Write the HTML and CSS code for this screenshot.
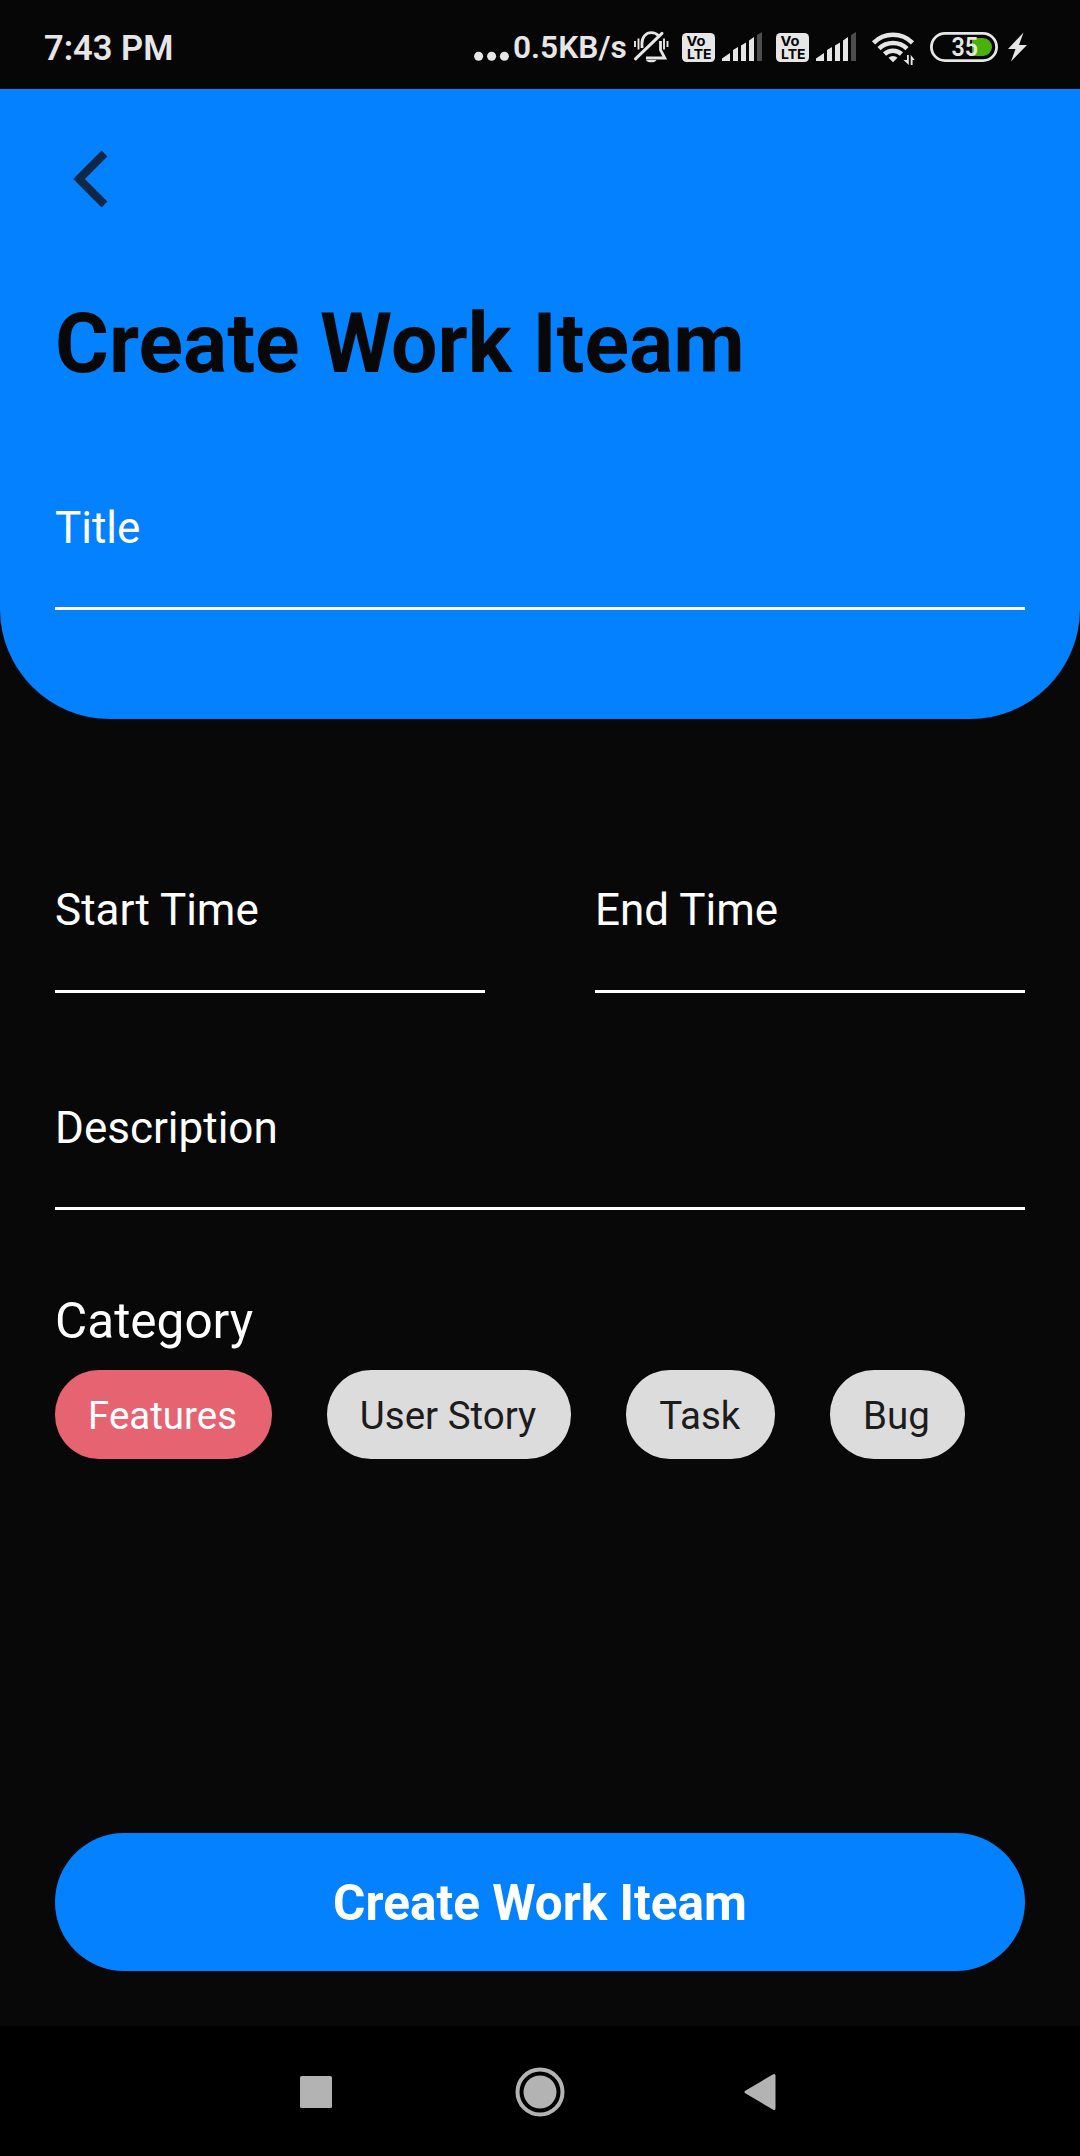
FILE: index.html
```html
<!DOCTYPE html>
<html lang="en">
<head>
<meta charset="utf-8">
<title>Create Work Iteam</title>
<link rel="stylesheet" href="styles.css">
</head>
<body>
<div class="status-bar">
  <span class="clock">7:43 PM</span>
  <div class="status-icons">
    <svg class="dots" width="36" height="89" viewBox="474 0 36 89"><circle cx="478.6" cy="56.3" r="4.5"/><circle cx="491.6" cy="56.3" r="4.5"/><circle cx="504.4" cy="56.3" r="4.5"/></svg>
    <span class="speed">0.5KB/s</span>
    <svg class="bell" width="36" height="89" viewBox="633 0 36 89">
      <g fill="none" stroke="#e6e6e6" stroke-width="2.8">
        <path d="M642 48v-5c0-6 4-10.300 9.300-10.300 3 0 5.500 1.200 7 3"/>
        <path d="M660.500 41v9l4.300 8H646"/>
        <path d="M635.500 58.800 662 33.300" stroke-width="3" stroke-linecap="round"/>
        <path d="M635 41v6M638.500 38.500v11M664 38.500v11M667.500 41v6" stroke-width="1.900"/>
      </g>
      <path d="M646 60h10.500a5.500 3.300 0 0 1-10.500 0z"/>
    </svg>
    <svg class="volte" width="33" height="89" viewBox="682 0 33 89"><rect x="682" y="33" width="33" height="29" rx="4.500"/><g fill="#060606" font-family="Inter, sans-serif" font-weight="700" font-size="13.500"><text x="686.500" y="46.200" textLength="19" lengthAdjust="spacingAndGlyphs">Vo</text><text x="687" y="59" textLength="24.500" lengthAdjust="spacingAndGlyphs">LTE</text></g></svg>
    <svg class="signal" width="41" height="89" viewBox="722 0 41 89"><path d="M722 61v-2.500l8-5.500v8zM733 61V50l5-3v14zM741 61V45.500l5-3V61zM749 61V40.500l5-3.500v24z"/><path fill="#4d4d4d" d="M757 61V35l5-3v29z"/></svg>
    <svg class="volte" width="33" height="89" viewBox="682 0 33 89"><rect x="682" y="33" width="33" height="29" rx="4.500"/><g fill="#060606" font-family="Inter, sans-serif" font-weight="700" font-size="13.500"><text x="686.500" y="46.200" textLength="19" lengthAdjust="spacingAndGlyphs">Vo</text><text x="687" y="59" textLength="24.500" lengthAdjust="spacingAndGlyphs">LTE</text></g></svg>
    <svg class="signal" width="41" height="89" viewBox="722 0 41 89"><path d="M722 61v-2.500l8-5.500v8zM733 61V50l5-3v14zM741 61V45.500l5-3V61zM749 61V40.500l5-3.500v24z"/><path fill="#4d4d4d" d="M757 61V35l5-3v29z"/></svg>
    <svg class="wifi" width="44" height="89" viewBox="871 0 44 89">
      <g fill="none" stroke="#e6e6e6" stroke-width="4.500"><path d="M873.500 42.800a27.500 27.500 0 0 1 39 0"/><path d="M879 48.600a20 20 0 0 1 28 0"/><path d="M884.500 54a12.500 12.500 0 0 1 17 0"/></g>
      <path d="M893 62.300l-4.500-4.500a6.500 6.500 0 0 1 9 0z"/>
      <path d="M907 55h1.800v10l-5.300-5h3.500zM910.700 65V54.800l4 5.200h-2.100v5z"/>
    </svg>
    <svg class="battery" width="68" height="89" viewBox="930 0 68 89"><rect x="931.400" y="33.400" width="65.200" height="27.200" rx="13.600" fill="none" stroke="#e6e6e6" stroke-width="2.800"/><path fill="#4caf10" d="M972 38h11a9 9 0 0 1 0 18h-11z"/><text x="951.500" y="56" font-family="Roboto, sans-serif" font-weight="600" font-size="25" textLength="26.500" lengthAdjust="spacingAndGlyphs">35</text></svg>
    <svg class="bolt" width="19" height="89" viewBox="1008 0 19 89"><path d="M1023.500 32.500 1008 49h7.500l-4.500 12.500L1027 45h-8z"/></svg>
  </div>
</div>
<header class="hero">
  <svg class="back" width="36" height="58" viewBox="0 0 36 58"><path d="M31.500 3.500 6 29l25.500 25.500" fill="none" stroke="#0e2845" stroke-width="8.200"/></svg>
  <h1>Create Work Iteam</h1>
  <div class="field"><label>Title</label></div>
</header>
<main class="form">
  <div class="times">
    <div class="field"><label>Start Time</label></div>
    <div class="field"><label>End Time</label></div>
  </div>
  <div class="field description"><label>Description</label></div>
  <h2>Category</h2>
  <div class="chips">
    <span class="chip selected">Features</span>
    <span class="chip">User Story</span>
    <span class="chip">Task</span>
    <span class="chip">Bug</span>
  </div>
  <button class="submit">Create Work Iteam</button>
</main>
<nav class="nav-bar">
  <svg width="32" height="32" viewBox="0 0 32 32"><rect width="32" height="32" rx="1.500"/></svg>
  <svg class="home" width="50" height="50" viewBox="0 0 50 50"><circle cx="25" cy="25" r="22.500" fill="none" stroke="#b3b3b3" stroke-width="4"/><circle cx="25" cy="25" r="16.500"/></svg>
  <svg width="32" height="38" viewBox="0 0 32 38"><path d="M2 19 30 2.500v33z" stroke="#b3b3b3" stroke-width="3" stroke-linejoin="round"/></svg>
</nav>
</body>
</html>
```
FILE: styles.css
```css
* { box-sizing: border-box; }
body {
  margin: 0;
  width: 1080px;
  height: 2156px;
  display: flex;
  flex-direction: column;
  background: #080808;
  color: #fff;
  font-family: Roboto, "Liberation Sans", sans-serif;
  overflow: hidden;
}
svg { display: block; flex: none; }
h1, h2 { margin: 0; }

.status-bar {
  height: 89px;
  display: flex;
  justify-content: space-between;
  padding: 0 53px 0 44px;
  background: #060606;
  color: #e6e6e6;
  line-height: 96px;
  font-weight: 600;
}
.status-icons { display: flex; fill: #e6e6e6; }
.clock { font-size: 34.5px; }
.speed { width: 116px; margin-left: 3px; font-size: 31.7px; line-height: 96px; white-space: nowrap; }
.bell { margin-left: 4px; }
.volte { margin-left: 13px; }
.signal { margin-left: 7px; }
.wifi { margin-left: 14px; }
.battery { margin-left: 15px; }
.bolt { margin-left: 10px; }

.hero {
  height: 630px;
  padding: 61px 55px 0;
  background: #0381ff;
  border-radius: 0 0 110px 110px;
}
.back { margin-left: 17.5px; }
h1 {
  margin: 88px 0 110px;
  color: #080808;
  font-size: 82.5px;
  line-height: 96px;
  font-weight: 700;
}
.field {
  height: 108px;
  border-bottom: 3px solid #fff;
}
.field label { display: block; font-size: 44px; line-height: 52px; }

.form {
  height: 1307px;
  padding: 165px 55px 0;
}
.times { display: grid; grid-template-columns: 1fr 1fr; column-gap: 110px; }
.times .field { height: 109px; }
.description { margin-top: 109px; }
h2 { margin: 82px 0 20px; font-size: 49.5px; line-height: 58px; font-weight: 400; }
.chips { display: flex; gap: 55px; }
.chip {
  height: 89px;
  padding: 0 34.8px 0 33px;
  border-radius: 44px;
  background: #dcdcdc;
  color: #1c1c1c;
  font-size: 38.5px;
  line-height: 91px;
}
.chip.selected { background: #e66472; color: #fff; }
.submit {
  display: block;
  width: 100%;
  height: 138px;
  margin-top: 374px;
  padding: 2px 0 0;
  border: 0;
  border-radius: 69px;
  background: #0381ff;
  color: #fff;
  font: 700 49.500px/136px Roboto, "Liberation Sans", sans-serif;
}

.nav-bar {
  height: 130px;
  display: flex;
  align-items: center;
  justify-content: space-between;
  padding: 1px 304px 0 300px;
  background: #000;
  fill: #b3b3b3;
}
.home { margin-left: 4px; }
```
